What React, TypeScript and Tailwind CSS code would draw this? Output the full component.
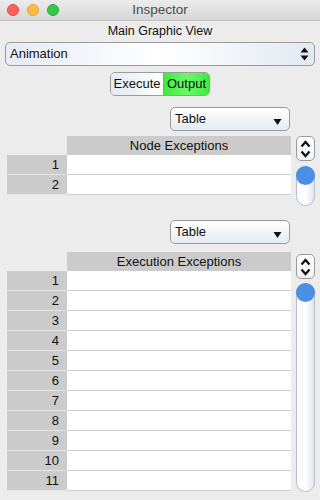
import React from "react"

const FONT = "font-['Liberation_Sans',Arial,sans-serif]"

function TrafficLights() {
  return (
    <div className="flex gap-[8px] pl-[7px]">
      <span className="w-[12px] h-[12px] rounded-full bg-[#fc605c] border border-[#de4a46]" />
      <span className="w-[12px] h-[12px] rounded-full bg-[#fdbc40] border border-[#dea236]" />
      <span className="w-[12px] h-[12px] rounded-full bg-[#34c84a] border border-[#27aa35]" />
    </div>
  )
}

function UpDownArrows() {
  return (
    <svg width="9" height="14" viewBox="0 0 9 14">
      <polygon points="4.5,0.5 8.5,5.5 0.5,5.5" fill="#111" />
      <polygon points="4.5,13.5 8.5,8.5 0.5,8.5" fill="#111" />
    </svg>
  )
}

function Stepper() {
  return (
    <div className="w-[19px] h-[25px] rounded-[5px] border border-[#9a9a9a] bg-gradient-to-b from-white to-[#eef1f5] flex items-center justify-center">
      <svg width="11" height="18" viewBox="0 0 11 18">
        <polyline points="1.5,6.5 5.5,2 9.5,6.5" fill="none" stroke="#111" strokeWidth="2.2" />
        <polyline points="1.5,11.5 5.5,16 9.5,11.5" fill="none" stroke="#111" strokeWidth="2.2" />
      </svg>
    </div>
  )
}

function ScrollTrack({ height }: { height: string }) {
  return (
    <div className={`w-[19px] ${height} rounded-full border border-[#b9bfc8] bg-gradient-to-r from-[#f7f9fb] via-white to-[#dfe7f0] flex flex-col`}>
      <div className="w-[19px] h-[19px] -ml-px -mt-px rounded-full bg-[#4b8fe4]" />
    </div>
  )
}

function TableSelect() {
  return (
    <div className="w-[120px] h-[24px] rounded-[5px] border border-[#9a9a9a] bg-gradient-to-b from-white to-[#e4ebf3] flex items-center justify-between pl-[4px] pr-[7px]">
      <span className="text-[13px] text-[#111]">Table</span>
      <svg width="9" height="8" viewBox="0 0 9 8" className="mt-[6px]">
        <polygon points="0.5,1 8.5,1 4.5,7" fill="#111" />
      </svg>
    </div>
  )
}

function DataTable({ title, rows }: { title: string; rows: number }) {
  return (
    <div className="flex flex-col w-[284px]">
      <div className="flex h-[19px]">
        <div className="w-[60px]" />
        <div className="flex-1 bg-[#cbcbcb] flex items-center justify-center text-[13px] text-[#111]">
          {title}
        </div>
      </div>
      {Array.from({ length: rows }, (_, i) => (
        <div key={i} className="flex h-[20px]">
          <div className="w-[60px] bg-[#cbcbcb] border-b border-[#e4e4e4] flex items-center justify-end pr-[8px] text-[13px] text-[#111]">
            {i + 1}
          </div>
          <div className="flex-1 bg-white border-b border-[#cfcfcf]" />
        </div>
      ))}
    </div>
  )
}

export default function App() {
  return (
    <div className={`w-[320px] h-[500px] bg-[#ececec] overflow-hidden flex flex-col ${FONT}`}>
      {/* Title bar */}
      <div className="h-[21px] bg-gradient-to-b from-[#ececec] to-[#d6d6d6] border-b border-[#c4c4c4] relative flex items-center">
        <TrafficLights />
        <span className="absolute inset-0 flex items-center justify-center text-[13.5px] text-[#4a4a4a]">
          Inspector
        </span>
      </div>

      <div className="h-[21px] flex items-center justify-center text-[12.5px] text-[#111]">
        Main Graphic View
      </div>

      {/* View popup */}
      <div className="mx-[5px] h-[24px] rounded-[5px] border border-[#9a9a9a] bg-gradient-to-r from-[#e6ecf4] via-white to-[#e2e9f2] flex items-center justify-between pl-[4px] pr-[5px]">
        <span className="text-[13px] text-[#111]">Animation</span>
        <UpDownArrows />
      </div>

      {/* Segmented control */}
      <div className="mt-[6px] flex justify-center">
        <div className="w-[100px] h-[24px] rounded-[5px] border border-[#9a9a9a] flex overflow-hidden text-[13px] text-[#111]">
          <div className="w-[53px] bg-gradient-to-r from-[#e3eaf3] to-white flex items-center justify-center border-r border-[#9a9a9a]">
            Execute
          </div>
          <div className="flex-1 bg-gradient-to-r from-[#3bea3b] via-[#6cf76c] to-[#3bea3b] flex items-center justify-center">
            Output
          </div>
        </div>
      </div>

      {/* Node exceptions */}
      <div className="mt-[11px] flex justify-end pr-[30px]">
        <TableSelect />
      </div>
      <div className="mt-[5px] flex pl-[7px]">
        <DataTable title="Node Exceptions" rows={2} />
        <div className="ml-[5px] flex flex-col gap-[5px]">
          <Stepper />
          <ScrollTrack height="h-[40px]" />
        </div>
      </div>

      {/* Execution exceptions */}
      <div className="mt-[14px] flex justify-end pr-[30px]">
        <TableSelect />
      </div>
      <div className="mt-[8px] flex pl-[7px]">
        <DataTable title="Execution Exceptions" rows={11} />
        <div className="ml-[5px] mt-[2px] flex flex-col gap-[4px]">
          <Stepper />
          <ScrollTrack height="h-[209px]" />
        </div>
      </div>
    </div>
  )
}
